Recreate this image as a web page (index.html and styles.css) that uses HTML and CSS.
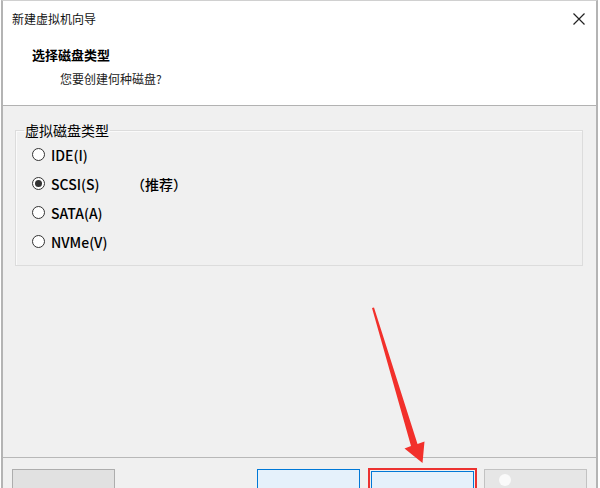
FILE: index.html
```html
<!DOCTYPE html>
<html lang="zh-CN">
<head>
  <meta charset="UTF-8">
  <title>新建虚拟机向导</title>
  <link rel="stylesheet" href="styles.css">
</head>
<body>
  <div class="window">
    <div class="titlebar">
      <span class="title">新建虚拟机向导</span>
      <button class="close" aria-label="关闭">
        <svg width="12" height="12" viewBox="0 0 12 12">
          <path d="M0.5 0.5 L11.5 11.5 M11.5 0.5 L0.5 11.5" stroke="#222" stroke-width="1.2" fill="none"/>
        </svg>
      </button>
    </div>

    <div class="header">
      <div class="header-title">选择磁盘类型</div>
      <div class="header-sub">您要创建何种磁盘?</div>
    </div>

    <div class="content">
      <fieldset class="group">
        <legend>虚拟磁盘类型</legend>
        <div class="options">
          <label class="option"><span class="radio"></span><span class="opt-text">IDE(I)</span></label>
          <label class="option"><span class="radio checked"></span><span class="opt-text">SCSI(S)</span><span class="note">（推荐）</span></label>
          <label class="option"><span class="radio"></span><span class="opt-text">SATA(A)</span></label>
          <label class="option"><span class="radio"></span><span class="opt-text">NVMe(V)</span></label>
        </div>
      </fieldset>
    </div>

    <!-- 按钮只露出上沿，文字在窗口外 -->
    <div class="footer">
      <button class="btn" aria-label="帮助"></button>
      <div class="spacer"></div>
      <button class="btn btn-focus" aria-label="上一步"></button>
      <div class="highlight">
        <button class="btn btn-focus" aria-label="下一步"></button>
      </div>
      <button class="btn btn-disabled" aria-label="取消"><span class="dot"></span></button>
    </div>
  </div>

  <!-- 标注箭头 -->
  <svg class="arrow" width="600" height="488" viewBox="0 0 600 488">
    <polygon points="372,308 374,307.5 417.5,444 424.5,441.5 422.5,463 404.5,448.5 411,446" fill="#f2302b"/>
  </svg>
</body>
</html>
```

FILE: styles.css
```css
html, body {
  margin: 0;
  padding: 0;
  background: #fff;
  overflow: hidden;
}

body {
  position: relative;
  width: 600px;
  height: 488px;
  font-family: "Noto Sans CJK SC", "Noto Sans", sans-serif;
  color: #000;
}

.window {
  box-sizing: border-box;
  margin-left: 1px;
  width: 597px;
  height: 488px;
  border-top: 1px solid #d0d0d0;
  border-left: 2px solid #b4b4b4;
  border-right: 2px solid #b4b4b4;
  display: flex;
  flex-direction: column;
  overflow: hidden;
}

.titlebar {
  height: 36px;
  flex: none;
  background: #fff;
  display: flex;
  align-items: center;
  padding-left: 9px;
}

.title {
  font-size: 12px;
  line-height: 16px;
  color: #111;
}

.close {
  margin-left: auto;
  margin-right: 10px;
  width: 14px;
  height: 14px;
  padding: 1px;
  border: none;
  background: none;
  display: flex;
}

.header {
  height: 69px;
  flex: none;
  background: #fff;
  padding-left: 29px;
  padding-top: 1px;
  box-sizing: border-box;
  border-bottom: 1px solid #b2b2b2;
  box-shadow: 0 1px 0 #fcfcfc;
}

.header-title {
  font-size: 13px;
  font-weight: bold;
  line-height: 18px;
  margin-top: 8px;
}

.header-sub {
  font-size: 12px;
  line-height: 18px;
  margin-top: 6px;
  padding-left: 28px;
  color: #222;
}

.content {
  flex: 1;
  background: #f0f0f0;
  padding: 14px 13px 0 12px;
}

.group {
  margin: 0;
  padding: 0 8px 9px;
  border: 1px solid #dcdcdc;
  box-shadow: inset 1px 1px 0 #fafafa;
}

.group legend {
  font-size: 14px;
  line-height: 20px;
  padding: 0 1px;
}

.options {
  padding-left: 8px;
}

.option {
  display: flex;
  align-items: center;
  height: 29px;
  font-size: 14px;
  font-weight: 500;
}

.radio {
  box-sizing: border-box;
  width: 13px;
  height: 13px;
  border: 1px solid #333;
  border-radius: 50%;
  background: #fff;
  margin-right: 6px;
  display: flex;
  align-items: center;
  justify-content: center;
}

.radio.checked::after {
  content: "";
  width: 7px;
  height: 7px;
  border-radius: 50%;
  background: #333;
}

.opt-text {
  width: 80px;
}

.footer {
  flex: none;
  height: 19px;
  background: #f0f0f0;
  border-top: 1px solid #b8b8b8;
  padding: 11px 9px 0 9px;
  display: flex;
  align-items: flex-start;
}

.spacer {
  flex: 1;
}

.btn {
  box-sizing: border-box;
  width: 103px;
  height: 23px;
  flex: none;
  padding: 0;
  background: #e1e1e1;
  border: 1px solid #adadad;
  position: relative;
}

.btn-focus {
  background: #e5f1fb;
  border-color: #0078d7;
}

.btn-disabled {
  background: #e6e6e6;
  border-color: #c2c2c2;
}

.dot {
  position: absolute;
  left: 14px;
  top: 4px;
  width: 12px;
  height: 12px;
  border-radius: 50%;
  background: #fafafa;
}

.footer > .btn-focus {
  margin-right: 8px;
}

.highlight {
  flex: none;
  border: 2px solid #ec3230;
  border-bottom: none;
  padding: 1px 1px 0;
  margin-right: 7px;
  margin-top: -1px;
}

.arrow {
  position: absolute;
  left: 0;
  top: 0;
  pointer-events: none;
}
```
